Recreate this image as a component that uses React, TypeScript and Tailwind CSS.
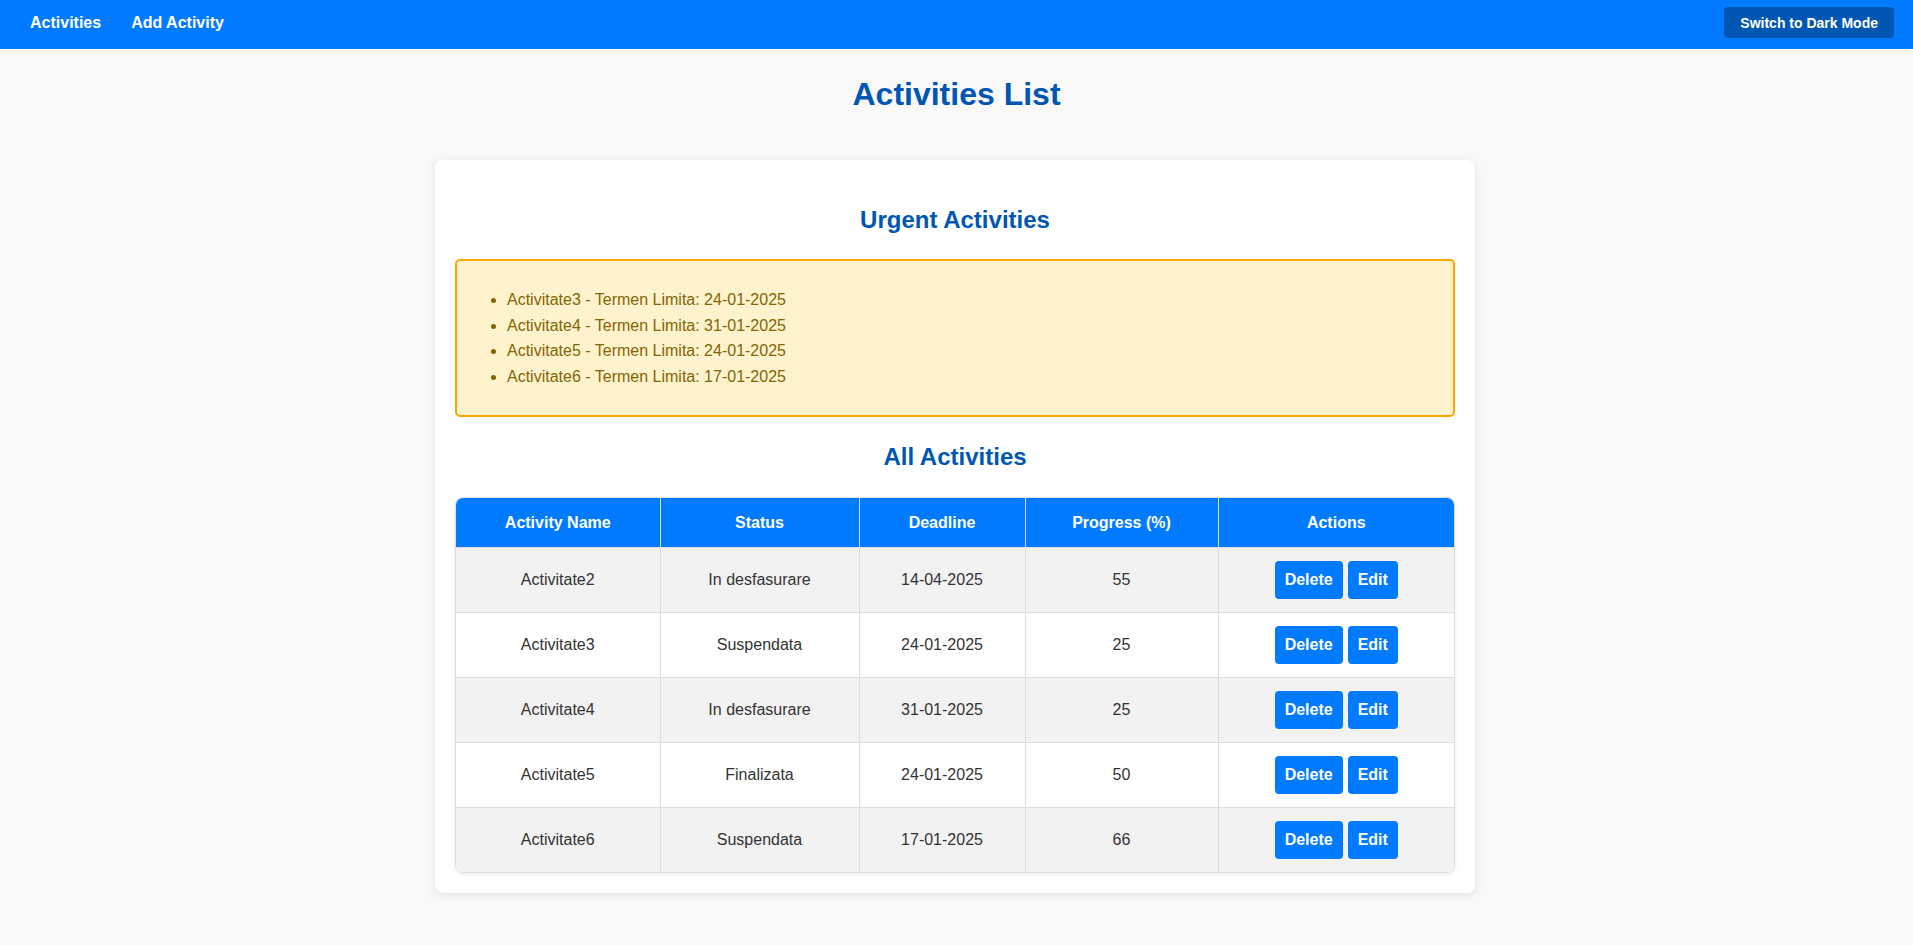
import React from "react";

type Activity = {
  name: string;
  status: string;
  deadline: string;
  progress: number;
};

const activities: Activity[] = [
  { name: "Activitate2", status: "In desfasurare", deadline: "14-04-2025", progress: 55 },
  { name: "Activitate3", status: "Suspendata", deadline: "24-01-2025", progress: 25 },
  { name: "Activitate4", status: "In desfasurare", deadline: "31-01-2025", progress: 25 },
  { name: "Activitate5", status: "Finalizata", deadline: "24-01-2025", progress: 50 },
  { name: "Activitate6", status: "Suspendata", deadline: "17-01-2025", progress: 66 },
];

const urgent = [
  { name: "Activitate3", deadline: "24-01-2025" },
  { name: "Activitate4", deadline: "31-01-2025" },
  { name: "Activitate5", deadline: "24-01-2025" },
  { name: "Activitate6", deadline: "17-01-2025" },
];

const headers = ["Activity Name", "Status", "Deadline", "Progress (%)", "Actions"];

function Navbar() {
  return (
    <nav className="flex h-[49px] items-center justify-between bg-[#007bff] pl-[30px] pr-[19px] pb-[4px]">
      <div className="flex gap-[30px] text-[16px] font-bold leading-[18px] text-white">
        <a href="#">Activities</a>
        <a href="#">Add Activity</a>
      </div>
      <button className="h-[31px] rounded-[4px] bg-[#0056b3] px-[16px] text-[14px] font-bold leading-[16px] text-white">
        Switch to Dark Mode
      </button>
    </nav>
  );
}

function ActionButton({ children }: { children: React.ReactNode }) {
  return (
    <button className="rounded-[4px] bg-[#007bff] p-[10px] text-[16px] font-bold leading-[18px] text-white">
      {children}
    </button>
  );
}

export default function App() {
  return (
    <div className="min-h-screen bg-[#f9f9f9] font-['Liberation_Sans',Arial,sans-serif] text-[#333]">
      <Navbar />
      <h1 className="mt-[27px] mb-[47px] text-center text-[32px] font-bold leading-[37px] text-[#0056b3]">
        Activities List
      </h1>
      <div className="flex justify-center pr-[3px]">
        <div className="w-[1040px] rounded-[8px] bg-white p-[20px] shadow-[0_2px_10px_rgba(0,0,0,0.1)]">
          <h2 className="mt-[26px] mb-[25px] text-center text-[24px] font-bold leading-[28px] text-[#0056b3]">
            Urgent Activities
          </h2>
          <div className="rounded-[5px] border-2 border-[#ffa500] bg-[#fff3cd] p-[10px] text-[#856404]">
            <ul className="my-[16px] list-disc pl-[40px] text-[16px] leading-[25.6px]">
              {urgent.map((u) => (
                <li key={u.name}>
                  {u.name} - Termen Limita: {u.deadline}
                </li>
              ))}
            </ul>
          </div>
          <h2 className="mt-[26px] mb-[26px] text-center text-[24px] font-bold leading-[28px] text-[#0056b3]">
            All Activities
          </h2>
          <div className="overflow-hidden rounded-[8px] border border-[#ddd] shadow-[0_2px_4px_rgba(0,0,0,0.08)]">
            <table className="w-full table-fixed border-collapse text-[16px] leading-[18px]">
              <colgroup>
                <col className="w-[204px]" />
                <col className="w-[199px]" />
                <col className="w-[166px]" />
                <col className="w-[193px]" />
                <col />
              </colgroup>
              <thead>
                <tr className="h-[49px] bg-[#007bff] text-white">
                  {headers.map((h, i) => (
                    <th
                      key={h}
                      className={`font-bold ${i > 0 ? "border-l border-[#ddd]" : ""}`}
                    >
                      {h}
                    </th>
                  ))}
                </tr>
              </thead>
              <tbody>
                {activities.map((a, idx) => (
                  <tr
                    key={a.name}
                    className={`h-[65px] border-t border-[#ddd] ${idx % 2 === 0 ? "bg-[#f2f2f2]" : "bg-white"}`}
                  >
                    <td className="text-center">{a.name}</td>
                    <td className="border-l border-[#ddd] text-center">{a.status}</td>
                    <td className="border-l border-[#ddd] text-center">{a.deadline}</td>
                    <td className="border-l border-[#ddd] text-center">{a.progress}</td>
                    <td className="border-l border-[#ddd] text-center">
                      <div className="flex justify-center gap-[5px]">
                        <ActionButton>Delete</ActionButton>
                        <ActionButton>Edit</ActionButton>
                      </div>
                    </td>
                  </tr>
                ))}
              </tbody>
            </table>
          </div>
        </div>
      </div>
    </div>
  );
}
